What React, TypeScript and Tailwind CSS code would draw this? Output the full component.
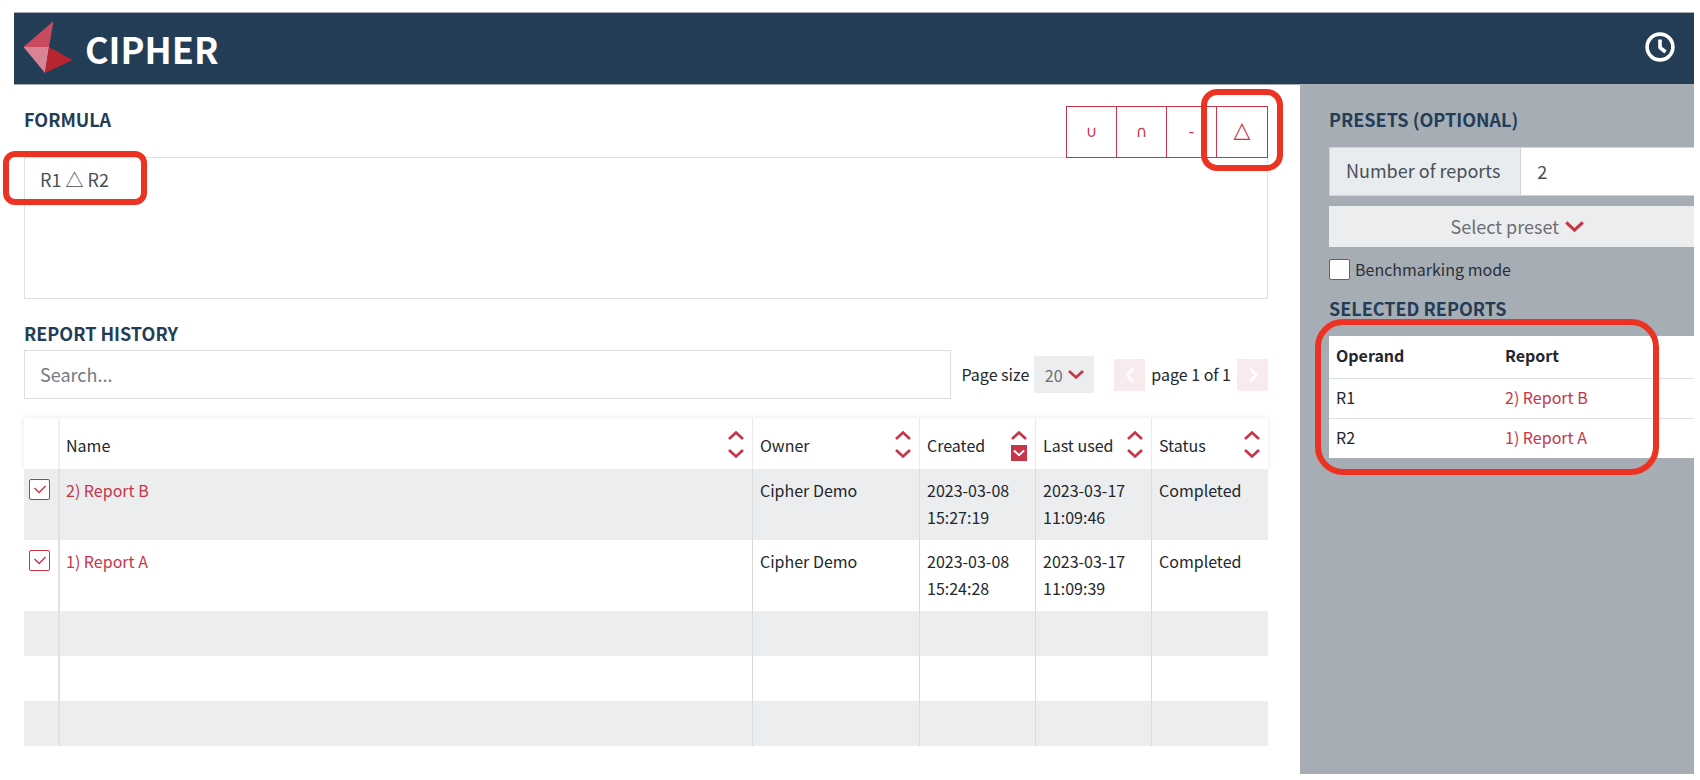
import React from "react";

function Chevron({ className, up = false }: { className: string; up?: boolean }) {
  return (
    <svg viewBox="0 0 16 11" className={className} fill="none" stroke="currentColor" strokeWidth="2.700" aria-hidden="true">
      <path d={up ? "M1 9 8 2.500 15 9" : "M1 2 8 8.500 15 2"} />
    </svg>
  );
}

function SideChevron({ left = false }: { left?: boolean }) {
  return (
    <svg viewBox="0 0 10 16" className="h-4 w-[10px]" fill="none" stroke="currentColor" strokeWidth="2.700" aria-hidden="true">
      <path d={left ? "M8 1.500 2 8 8 14.500" : "M2 1.500 8 8 2 14.500"} />
    </svg>
  );
}

function Logo() {
  return (
    <svg viewBox="0 0 50 53" className="h-[53px] w-[50px]" aria-hidden="true">
      <path d="M30.500 0 0.500 26H26Z" fill="#c94a5e" />
      <path d="M0.500 26H26L22 52Z" fill="#d98495" />
      <path d="M26 26 49.500 39 22 52Z" fill="#b8242f" />
    </svg>
  );
}

function Clock() {
  return (
    <svg viewBox="0 0 30 30" className="size-[30px]" fill="none" stroke="#fff" aria-hidden="true">
      <circle cx="15" cy="15" r="12.900" strokeWidth="3.600" />
      <path d="M15 7.500V15.500L20.500 20" strokeWidth="3.600" strokeLinejoin="round" />
    </svg>
  );
}

function Heading({ children }: { children: React.ReactNode }) {
  return <h2 className="text-[18px] leading-6 font-bold text-[#233d57]">{children}</h2>;
}

function Tick({ label }: { label: string }) {
  return (
    <span className="grid size-[21px] place-items-center text-[#c93548]">
      <input
        type="checkbox"
        defaultChecked
        aria-label={label}
        className="col-start-1 row-start-1 size-[21px] appearance-none rounded-[2px] border border-[#c93548] bg-white"
      />
      <svg viewBox="0 0 12 9" className="pointer-events-none col-start-1 row-start-1 h-[9px] w-[12px]" fill="none" stroke="currentColor" strokeWidth="1.400" aria-hidden="true">
        <path d="M0.500 3 5.200 7.500 11.500 1" />
      </svg>
    </span>
  );
}

function Sorter({ column, active = false }: { column: string; active?: boolean }) {
  return (
    <span className="flex flex-col items-center gap-[3px] text-[#c93548]">
      <button type="button" aria-label={`Sort ${column} ascending`} className="flex h-[13px] w-4 items-center justify-center">
        <Chevron up className="h-[11px] w-4" />
      </button>
      {active ? (
        <button type="button" aria-label={`Sort ${column} descending`} className="flex h-4 w-4 items-center justify-center bg-[#c93548] text-white">
          <Chevron className="h-2 w-3" />
        </button>
      ) : (
        <button type="button" aria-label={`Sort ${column} descending`} className="flex h-4 w-4 items-center justify-center">
          <Chevron className="h-[11px] w-4" />
        </button>
      )}
    </span>
  );
}

const columns = ["Name", "Owner", "Created", "Last used", "Status"];

const reports = [
  { name: "2) Report B", created: ["2023-03-08", "15:27:19"], used: ["2023-03-17", "11:09:46"] },
  { name: "1) Report A", created: ["2023-03-08", "15:24:28"], used: ["2023-03-17", "11:09:39"] },
];

const operands = [
  { id: "R1", report: "2) Report B" },
  { id: "R2", report: "1) Report A" },
];

const operators = [
  { symbol: "∪", label: "Union" },
  { symbol: "∩", label: "Intersection" },
  { symbol: "-", label: "Difference" },
];

function Stamp({ value }: { value: string[] }) {
  return (
    <>
      {value[0]}
      <br />
      {value[1]}
    </>
  );
}

function HistoryTable() {
  return (
    <table className="mt-[19px] w-full table-fixed border-separate border-spacing-0 text-left text-[16px] leading-[27px] text-[#23272d]">
      <colgroup>
        <col className="w-[34px]" />
        <col />
        <col className="w-[167px]" />
        <col className="w-[116px]" />
        <col className="w-[116px]" />
        <col className="w-[117px]" />
      </colgroup>
      <thead className="shadow-[0_0_5px_rgba(0,0,0,0.1)]">
        <tr className="h-[51px]">
          <td />
          {columns.map((c, i) => (
            <th key={c} scope="col" className={i === 0 ? "border-l-2 border-[#f0f1f2] pt-[3px] pr-2 pl-[6px] font-normal" : "border-l border-[#e9ebed] pt-[3px] pr-2 pl-[7px] font-normal"}>
              <span className="flex items-center justify-between whitespace-nowrap">
                {c}
                <Sorter column={c} active={c === "Created"} />
              </span>
            </th>
          ))}
        </tr>
      </thead>
      <tbody className="align-top">
        {reports.map((r) => (
          <tr key={r.name} className="h-[71px] odd:bg-[#ecedef]">
            <td className="pt-[10px] pl-[5px]">
              <Tick label={`Select ${r.name}`} />
            </td>
            <td className="border-l-2 border-[#dfe1e3] pt-2 pl-[6px]">
              <a href="#report" className="text-[#c93548]">{r.name}</a>
            </td>
            <td className="border-l border-[#d9dcdf] pt-2 pl-[7px]">Cipher Demo</td>
            <td className="border-l border-[#d9dcdf] pt-2 pl-[7px]"><Stamp value={r.created} /></td>
            <td className="border-l border-[#d9dcdf] pt-2 pl-[7px]"><Stamp value={r.used} /></td>
            <td className="border-l border-[#d9dcdf] pt-2 pl-[7px]">Completed</td>
          </tr>
        ))}
        {[0, 1, 2].map((n) => (
          <tr key={n} className="h-[45px] odd:bg-[#ecedef]">
            <td />
            <td className="border-l-2 border-[#dfe1e3]" />
            <td className="border-l border-[#d9dcdf]" />
            <td className="border-l border-[#d9dcdf]" />
            <td className="border-l border-[#d9dcdf]" />
            <td className="border-l border-[#d9dcdf]" />
          </tr>
        ))}
      </tbody>
    </table>
  );
}

export default function App() {
  return (
    <div className="min-h-screen overflow-hidden bg-white pt-3 pr-[6px] pb-[6px] pl-[14px] font-['Noto_Sans_CJK_SC','Noto_Sans',sans-serif]">
      <header className="flex h-[73px] items-center justify-between border-y border-[#a6adb5] bg-[#233d57] pr-[19px] pl-[9px]">
        <div className="flex items-center gap-3 pb-[2px]">
          <Logo />
          <h1 className="text-[36px] leading-[48px] font-bold text-white">CIPHER</h1>
        </div>
        <button type="button" aria-label="Recent activity" className="-mt-1">
          <Clock />
        </button>
      </header>

      <div className="flex">
        <main className="min-w-0 flex-1 pr-8 pl-[10px]">
          <div className="flex items-start justify-between pt-[21px]">
            <div className="pt-px">
              <Heading>FORMULA</Heading>
            </div>
            <div className="relative z-10 flex border border-[#c93548] bg-white text-[#c93548]">
              {operators.map((o) => (
                <button key={o.label} type="button" aria-label={o.label} className="h-[50px] w-[50px] border-r border-[#c93548] font-['DejaVu_Sans',sans-serif] text-[16px]">
                  {o.symbol}
                </button>
              ))}
              <button type="button" aria-label="Symmetric difference" className="h-[50px] w-[50px] pb-[6px] font-['DejaVu_Sans',sans-serif] text-[22px]">
                △
              </button>
              <div className="pointer-events-none absolute -top-[18px] -right-4 size-[82px] rounded-2xl border-6 border-[#ec3323]" />
            </div>
          </div>
          <div className="relative -mt-px">
            <textarea
              aria-label="Formula"
              defaultValue="R1 △ R2"
              className="block h-[142px] w-full resize-none border border-[#dee0e3] px-[15px] py-2 text-[18px] leading-[27px] text-[#494f56] outline-none"
            />
            <div className="pointer-events-none absolute -top-[6px] -left-[21px] h-[54px] w-[144px] rounded-xl border-6 border-[#ec3323]" />
          </div>

          <div className="pt-[22px]">
            <Heading>REPORT HISTORY</Heading>
          </div>
          <div className="mt-[5px] flex items-center text-[16px] text-[#23272d]">
            <input
              type="text"
              aria-label="Search reports"
              placeholder="Search..."
              className="h-[49px] min-w-0 flex-1 border border-[#dbdfe2] px-[15px] pb-[2px] text-[18px] outline-none placeholder:text-[#747b83]"
            />
            <label htmlFor="page-size" className="ml-[10px] pb-[2px]">Page size</label>
            <div className="ml-[5px] flex h-[37px] w-[60px] items-center justify-center gap-[5px] bg-[#ecedef]">
              <select id="page-size" className="appearance-none bg-transparent text-[#6c6f73] outline-none">
                <option>20</option>
              </select>
              <Chevron className="h-[11px] w-4 text-[#c93548]" />
            </div>
            <button type="button" aria-label="Previous page" disabled className="ml-5 flex h-8 w-[31px] items-center justify-center bg-[#f9eaed] text-white">
              <SideChevron left />
            </button>
            <span className="mx-[6px] pb-[2px]">page 1 of 1</span>
            <button type="button" aria-label="Next page" disabled className="flex h-8 w-[31px] items-center justify-center bg-[#f9eaed] text-white">
              <SideChevron />
            </button>
          </div>
          <HistoryTable />
        </main>

        <aside className="min-h-[689px] w-[394px] shrink-0 overflow-hidden bg-[#a6adb5] pt-[22px] pl-[29px]">
          <div className="-mr-[11px]">
            <Heading>PRESETS (OPTIONAL)</Heading>
            <div className="mt-4 flex h-[49px] border border-[#ced3d8] text-[18px]">
              <label htmlFor="count" className="flex items-center border-r border-[#ced3d8] bg-[#e8ecef] pr-5 pb-[2px] pl-4 whitespace-nowrap text-[#494f56]">
                Number of reports
              </label>
              <input id="count" type="text" defaultValue="2" className="min-w-0 flex-1 bg-white px-4 text-[#494f56] outline-none" />
            </div>
            <div className="mt-[10px] flex h-[41px] items-center justify-center gap-[5px] bg-[#ecedef]">
              <select aria-label="Preset" className="appearance-none bg-transparent text-[18px] text-[#6c6f73] outline-none">
                <option>Select preset</option>
              </select>
              <Chevron className="h-[13px] w-[19px] text-[#c93548]" />
            </div>
            <label className="mt-[10px] flex items-center gap-[5px] text-[16px] leading-6 text-[#2b3037]">
              <input type="checkbox" className="size-[21px] appearance-none rounded-[2px] border border-[#c93548] bg-white" />
              Benchmarking mode
            </label>
            <div className="mt-[15px]">
              <Heading>SELECTED REPORTS</Heading>
            </div>
            <div className="relative mt-4">
              <table className="w-full table-fixed border-separate border-spacing-0 bg-white text-left text-[16px] leading-6 text-[#23272d]">
                <colgroup>
                  <col className="w-[169px]" />
                  <col />
                </colgroup>
                <thead>
                  <tr className="h-[42px]">
                    <th scope="col" className="pb-1 pl-[7px] font-bold">Operand</th>
                    <th scope="col" className="pb-1 pl-[7px] font-bold">Report</th>
                  </tr>
                </thead>
                <tbody>
                  {operands.map((o) => (
                    <tr key={o.id} className="h-10">
                      <td className="border-t border-[#dce1e5] pb-1 pl-[7px]">{o.id}</td>
                      <td className="border-t border-[#dce1e5] pb-1 pl-[7px]">
                        <a href="#report" className="text-[#c93548]">{o.report}</a>
                      </td>
                    </tr>
                  ))}
                </tbody>
              </table>
              <div className="pointer-events-none absolute -top-[17px] -left-[14px] h-[156px] w-[344px] rounded-[28px] border-6 border-[#ec3323]" />
            </div>
          </div>
        </aside>
      </div>
    </div>
  );
}
